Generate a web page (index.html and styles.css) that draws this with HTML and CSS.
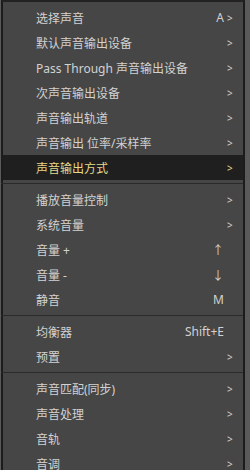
FILE: index.html
```html
<!DOCTYPE html>
<html lang="zh-CN">
<head>
    <meta charset="UTF-8">
    <meta name="viewport" content="width=device-width, initial-scale=1.0">
    <title>声音菜单</title>
    <link rel="stylesheet" href="styles.css">
</head>
<body>
    <div class="menu">
        <div class="menu-item"><span class="label">选择声音</span><span class="key">A</span><span class="sub">&gt;</span></div>
        <div class="menu-item"><span class="label">默认声音输出设备</span><span class="sub">&gt;</span></div>
        <div class="menu-item"><span class="label">Pass Through 声音输出设备</span><span class="sub">&gt;</span></div>
        <div class="menu-item"><span class="label">次声音输出设备</span><span class="sub">&gt;</span></div>
        <div class="menu-item"><span class="label">声音输出轨道</span><span class="sub">&gt;</span></div>
        <div class="menu-item"><span class="label">声音输出 位率/采样率</span><span class="sub">&gt;</span></div>
        <div class="menu-item active"><span class="label">声音输出方式</span><span class="sub">&gt;</span></div>
        <div class="separator"></div>
        <div class="menu-item"><span class="label">播放音量控制</span><span class="sub">&gt;</span></div>
        <div class="menu-item"><span class="label">系统音量</span><span class="sub">&gt;</span></div>
        <div class="menu-item"><span class="label">音量 +</span><span class="key">↑</span><span class="sub"></span></div>
        <div class="menu-item"><span class="label">音量 -</span><span class="key">↓</span><span class="sub"></span></div>
        <div class="menu-item"><span class="label">静音</span><span class="key">M</span><span class="sub"></span></div>
        <div class="separator"></div>
        <div class="menu-item"><span class="label">均衡器</span><span class="key">Shift+E</span><span class="sub"></span></div>
        <div class="menu-item"><span class="label">预置</span><span class="sub">&gt;</span></div>
        <div class="separator"></div>
        <div class="menu-item"><span class="label">声音匹配(同步)</span><span class="sub">&gt;</span></div>
        <div class="menu-item"><span class="label">声音处理</span><span class="sub">&gt;</span></div>
        <div class="menu-item"><span class="label">音轨</span><span class="sub">&gt;</span></div>
        <div class="menu-item"><span class="label">音调</span><span class="sub">&gt;</span></div>
    </div>
</body>
</html>
```

FILE: styles.css
```css
body {
    margin: 0;
    background: #5a5a5a;
    font-family: "Noto Sans", "Noto Sans CJK SC", sans-serif;
    font-size: 12px;
    color: #d2d2d2;
    overflow: hidden;
}

.menu {
    width: 240px;
    margin-left: 1px;
    padding-top: 3px;
    background: #464646;
    border-top: 2px solid #222;
    border-left: 2px solid #1c1c1c;
    border-right: 2px solid #1c1c1c;
}

.menu-item {
    display: flex;
    align-items: center;
    height: 25px;
    padding-left: 33px;
    white-space: nowrap;
}

.menu-item .label {
    flex: 1;
}

.menu-item .key {
    margin-right: 1px;
}

.menu-item .sub {
    width: 16px;
    font-size: 10px;
    text-align: left;
    padding-left: 2px;
}

.menu-item.active {
    background: #1f1f1f;
    color: #e6d98a;
}

.separator {
    height: 7px;
    position: relative;
}

.separator::after {
    content: "";
    position: absolute;
    left: -2px;
    right: 0;
    top: 3px;
    border-top: 1px solid #2a2a2a;
}
```
